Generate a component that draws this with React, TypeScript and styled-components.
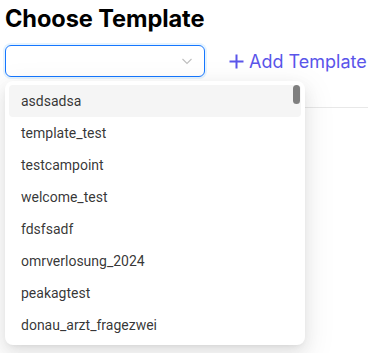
import React from 'react'
import styled, { createGlobalStyle } from "styled-components";

const GlobalStyle = createGlobalStyle`
  body {
    margin: 0;
    background: #ffffff;
    font-family: Inter, "Noto Sans", sans-serif;
  }
`;

const templates = [
  "asdsadsa",
  "template_test",
  "testcampoint",
  "welcome_test",
  "fdsfsadf",
  "omrverlosung_2024",
  "peakagtest",
  "donau_arzt_fragezwei",
];

export default function App() {
  return (
    <>
      <GlobalStyle />
      <Page>
        <Title>Choose Template</Title>
        <Row>
          <SelectWrap>
            <SelectBox>
              <Chevron width="12" height="12" viewBox="0 0 12 12">
                <path d="M1.5 4 L6 8.5 L10.5 4" fill="none" stroke="#bfbfbf" strokeWidth="1.1" />
              </Chevron>
            </SelectBox>
            <Dropdown>
              {templates.map((t, i) => (
                <Option key={t} active={i === 0}>{t}</Option>
              ))}
              <Thumb />
            </Dropdown>
          </SelectWrap>
          <AddButton>
            <svg width="15" height="15" viewBox="0 0 15 15">
              <path d="M7.5 0.5 V14.5 M0.5 7.5 H14.5" stroke="#5a55ea" strokeWidth="2" />
            </svg>
            Add Template
          </AddButton>
        </Row>
        <Divider />
      </Page>
    </>
  );
}

const Page = styled.div`
  padding: 4px 5px 0;
  height: 353px;
  box-sizing: border-box;
`;

const Title = styled.h1`
  margin: 0;
  font-size: 23.6px;
  line-height: 29px;
  font-weight: 700;
  letter-spacing: -0.1px;
  color: #000;
`;

const Row = styled.div`
  display: flex;
  align-items: center;
  gap: 24px;
  margin-top: 12px;
`;

const SelectWrap = styled.div`
  position: relative;
  width: 200px;
`;

const SelectBox = styled.div`
  height: 32px;
  box-sizing: border-box;
  border: 1px solid #1677ff;
  border-radius: 6px;
  box-shadow: 0 0 0 2px rgba(5, 145, 255, 0.1);
  display: flex;
  align-items: center;
  justify-content: flex-end;
  padding-right: 11px;
`;

const Chevron = styled.svg`
  display: block;
`;

const Dropdown = styled.div`
  position: absolute;
  top: 36px;
  left: 0;
  width: 300px;
  box-sizing: border-box;
  padding: 4px;
  background: #fff;
  border-radius: 8px;
  box-shadow: 0 6px 16px 0 rgba(0, 0, 0, 0.08), 0 3px 6px -4px rgba(0, 0, 0, 0.12),
    0 9px 28px 8px rgba(0, 0, 0, 0.05);
  z-index: 10;
`;

const Option = styled.div<{ active?: boolean }>`
  height: 32px;
  line-height: 32px;
  padding: 0 12px;
  font-family: Roboto, "Liberation Sans", sans-serif;
  font-size: 14px;
  color: rgba(0, 0, 0, 0.8);
  border-radius: 4px;
  background: ${(p) => (p.active ? "#f5f5f5" : "transparent")};
`;

const Thumb = styled.div`
  position: absolute;
  top: 4px;
  right: 5px;
  width: 7px;
  height: 19px;
  border-radius: 4px;
  background: #7f7f7f;
`;

const AddButton = styled.div`
  display: flex;
  align-items: center;
  gap: 5px;
  font-size: 18px;
  color: #5a55ea;
`;

const Divider = styled.div`
  height: 1px;
  background: #e8e8e8;
  margin-top: 30px;
`;
